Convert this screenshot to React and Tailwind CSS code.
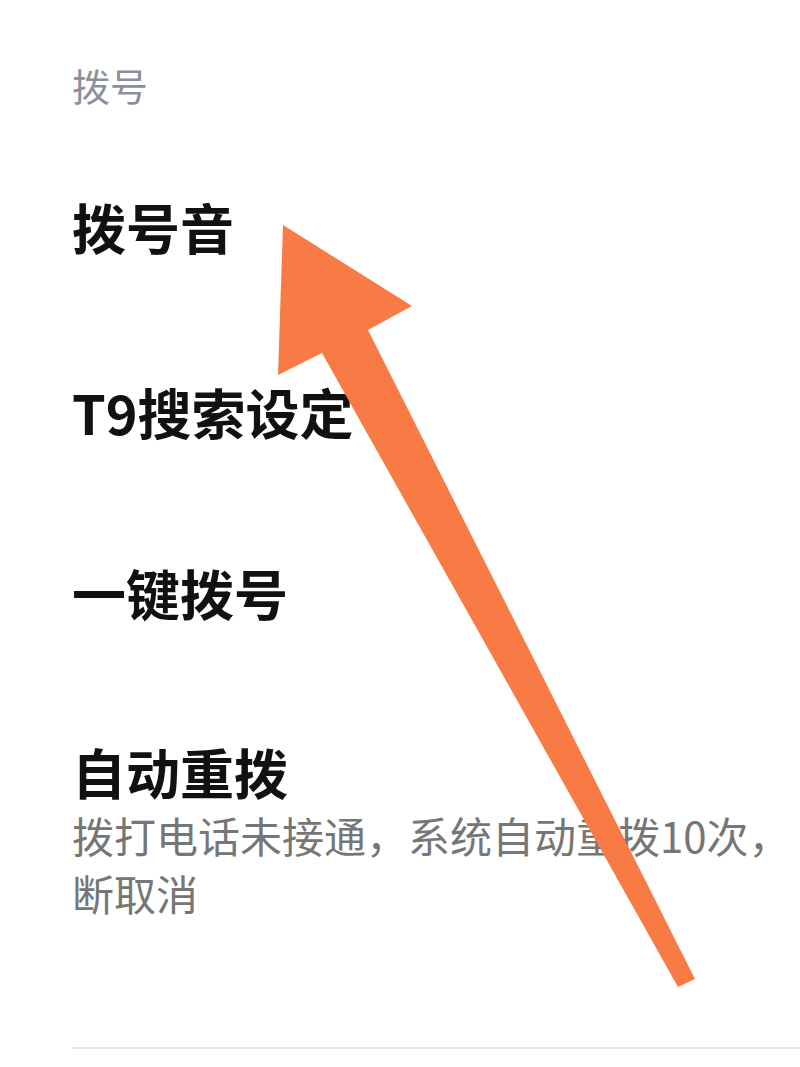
import React from "react";

const FONT = { fontFamily: '"Noto Sans CJK SC", "Noto Sans", sans-serif' };

const ITEMS = [
  { title: "拨号音", mt: "mt-[87px]" },
  { title: "T9搜索设定", mt: "mt-[125px]" },
  { title: "一键拨号", mt: "mt-[121px]" },
];

function Arrow() {
  return (
    <svg
      className="absolute inset-0 pointer-events-none"
      width="800"
      height="1067"
      viewBox="0 0 800 1067"
    >
      <polygon
        points="283,225 412,306 368,330 695,979 678,987 322,353 278,375"
        fill="#f87b45"
      />
    </svg>
  );
}

export default function App() {
  return (
    <div
      className="relative w-[800px] h-[1067px] overflow-hidden bg-white"
      style={FONT}
    >
      <div className="flex flex-col pl-[72px] pt-[60px]">
        <div className="text-[38px] leading-[50px] text-[#8c909a]">拨号</div>

        {ITEMS.map((item) => (
          <div
            key={item.title}
            className={`${item.mt} text-[54px] leading-[60px] font-bold text-[#111111]`}
          >
            {item.title}
          </div>
        ))}

        <div className="mt-[119px] text-[54px] leading-[60px] font-bold text-[#111111]">
          自动重拨
        </div>
        <div className="mt-[4px] text-[42px] leading-[58px] text-[#767676] whitespace-nowrap">
          <div>拨打电话未接通，系统自动重拨10次，</div>
          <div>断取消</div>
        </div>

        <div className="mt-[125px] h-[2px] bg-[#e6e6e6] mr-[-72px]" />
      </div>
      <Arrow />
    </div>
  );
}
